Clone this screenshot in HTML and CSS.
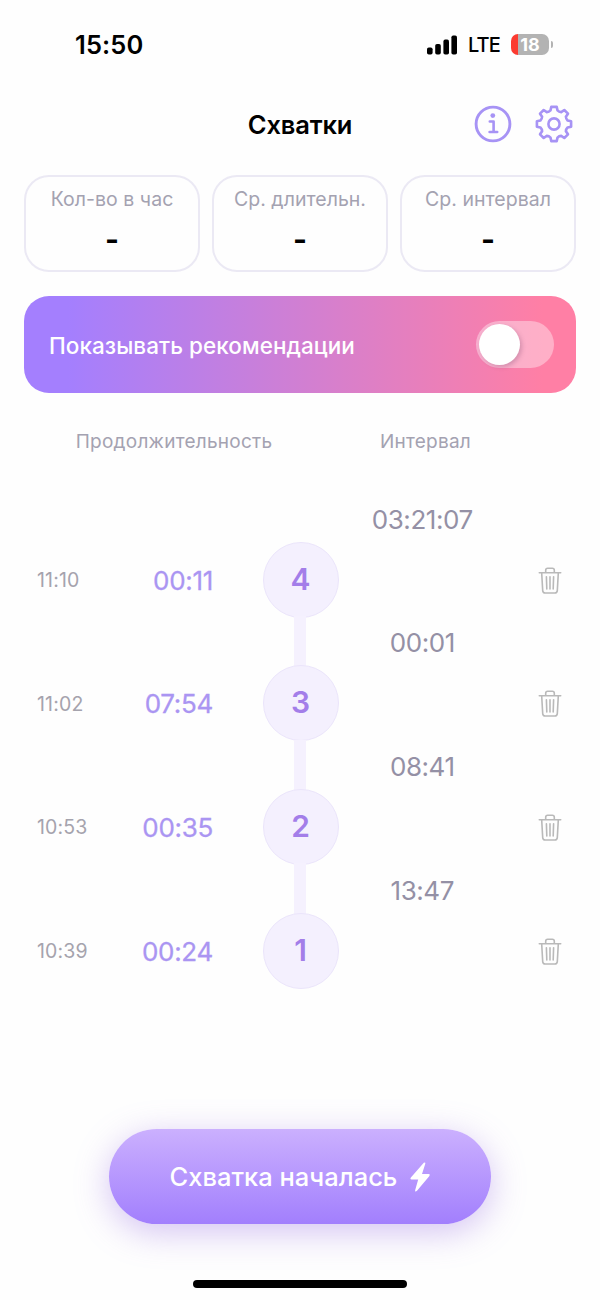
FILE: index.html
```html
<!DOCTYPE html>
<html lang="ru">
<head>
<meta charset="utf-8">
<title>Схватки</title>
<link rel="stylesheet" href="styles.css">
</head>
<body>
<svg class="defs" aria-hidden="true">
  <symbol id="trash" viewBox="0 0 24 28">
    <path d="M1.3 5.7H22.7M7.7 5.5V3.2Q7.7 1.2 9.7 1.2H14.3Q16.3 1.2 16.3 3.2V5.5M3.7 6L4.7 23.6Q4.9 26 7.2 26H16.8Q19.1 26 19.3 23.6L20.3 6M8.4 9.7L8.8 22M12 9.7V22M15.6 9.7L15.2 22" fill="none" stroke="currentColor" stroke-width="1.6" stroke-linecap="round" stroke-linejoin="round"/>
  </symbol>
</svg>
<div class="screen">
  <header class="status">
    <span class="clock">15:50</span>
    <div class="status-right">
      <svg class="signal" width="30" height="20" viewBox="0 0 30 20"><rect x="0" y="12.5" width="5.6" height="7" rx="1.8"/><rect x="8.2" y="9" width="5.6" height="10.5" rx="1.8"/><rect x="16.4" y="4.6" width="5.6" height="14.9" rx="1.8"/><rect x="24.4" y="0.5" width="5.6" height="19" rx="1.8"/></svg>
      <span class="lte">LTE</span>
      <div class="battery"><span class="level">18</span><i class="cap"></i></div>
    </div>
  </header>
  <nav class="nav">
    <h1 class="title">Схватки</h1>
    <div class="actions">
      <svg width="38" height="38" viewBox="-19 -19 38 38" fill="none" stroke="currentColor" stroke-width="2.9" stroke-linecap="round" stroke-linejoin="round"><circle r="16.9"/><circle cx="-.2" cy="-8.4" r="2.4" fill="currentColor" stroke="none"/><path d="M-3.2-2.5H.6V7.8M-3.4 8H4.2" stroke-width="2.6"/></svg>
      <svg width="38" height="38" viewBox="-19 -19 38 38" fill="none" stroke="currentColor" stroke-width="2.6" stroke-linejoin="round"><path d="M-2.7-17.1H2.7L3.5-13.6Q5-12 7.2-11.9L10.3-14L14-10.3L11.9-7.2Q12-5 13.6-3.5L17.1-2.7V2.7L13.6 3.5Q12 5 11.9 7.2L14 10.3L10.3 14L7.2 11.9Q5 12 3.5 13.6L2.7 17.1H-2.7L-3.5 13.6Q-5 12-7.2 11.9L-10.3 14L-14 10.3L-11.9 7.2Q-12 5-13.6 3.5L-17.1 2.7V-2.7L-13.6-3.5Q-12-5-11.9-7.2L-14-10.3L-10.3-14L-7.2-11.9Q-5-12-3.5-13.6Z"/><circle r="5.6"/></svg>
    </div>
  </nav>
  <main>
    <section class="stats">
      <div class="stat"><span class="stat-label">Кол-во в час</span><b class="dash">-</b></div>
      <div class="stat"><span class="stat-label">Ср. длительн.</span><b class="dash">-</b></div>
      <div class="stat"><span class="stat-label">Ср. интервал</span><b class="dash">-</b></div>
    </section>
    <section class="banner">
      <span class="banner-text">Показывать рекомендации</span>
      <span class="switch"><i class="knob"></i></span>
    </section>
    <div class="heads"><span class="head-duration">Продолжительность</span><span class="head-interval">Интервал</span></div>
    <section class="timeline">
      <div class="gap"><span class="interval">03:21:07</span></div>
      <div class="row"><span class="time">11:10</span><span class="duration">00:11</span><span class="num">4</span><svg class="trash"><use href="#trash"/></svg></div>
      <div class="gap"><i class="link"></i><span class="interval">00:01</span></div>
      <div class="row"><span class="time">11:02</span><span class="duration">07:54</span><span class="num">3</span><svg class="trash"><use href="#trash"/></svg></div>
      <div class="gap"><i class="link"></i><span class="interval">08:41</span></div>
      <div class="row"><span class="time">10:53</span><span class="duration">00:35</span><span class="num">2</span><svg class="trash"><use href="#trash"/></svg></div>
      <div class="gap"><i class="link"></i><span class="interval">13:47</span></div>
      <div class="row"><span class="time">10:39</span><span class="duration">00:24</span><span class="num">1</span><svg class="trash"><use href="#trash"/></svg></div>
    </section>
  </main>
  <footer class="footer">
    <button class="start"><span class="start-text">Схватка началась</span><svg width="20" height="30" viewBox="0 0 20 30"><path d="M13.8.8Q15.8-.4 15.2 2L12 12H18.6Q20.6 12.2 19.2 14.2L7 28.8Q4.8 30.6 5.2 28L8.2 17.6H1.6Q-.4 17.2.9 15.4Z" fill="currentColor"/></svg></button>
    <div class="home"></div>
  </footer>
</div>
</body>
</html>
```
FILE: styles.css
```css
* { box-sizing: border-box; }
body { margin: 0; background: #fefefe; font-family: Inter, "Liberation Sans", sans-serif; color: #000; }
.defs { display: none; }
.screen { width: 600px; height: 1300px; display: flex; flex-direction: column; overflow: hidden; }
.status { height: 88px; padding: 0 51px 0 75px; display: flex; align-items: center; justify-content: space-between; }
.clock { font-size: 25.5px; font-weight: 600; letter-spacing: .1px; padding-top: 1px; }
.status-right { display: flex; align-items: center; padding-top: 1px; }
.signal { margin-right: 11px; }
.lte { font-size: 20px; font-weight: 500; letter-spacing: -.9px; width: 43px; line-height: 22px; padding-top: 1px; }
.battery { position: relative; width: 38px; height: 21px; border-radius: 7px; background: linear-gradient(90deg, #fb3b30 7px, #b3b3b3 7px); color: #fff; text-align: center; }
.level { display: block; font-size: 18px; line-height: 21px; font-weight: 700; letter-spacing: -.1px; }
.cap { position: absolute; left: 39.5px; top: 7px; width: 2px; height: 7px; border-radius: 0 3px 3px 0; background: #b3b3b3; }
.nav { height: 72px; display: grid; grid-template-columns: 1fr auto 1fr; align-items: center; padding: 0 26px; }
.title { grid-column: 2; margin: 0; font-size: 25.5px; font-weight: 600; letter-spacing: -.15px; }
.actions { justify-self: end; display: flex; gap: 23px; color: #a793f5; padding-right: 1px; }
.actions svg { display: block; }
main { padding: 15px 24px 0; }
.stats { display: grid; grid-template-columns: repeat(3, 1fr); gap: 12px; }
.stat { height: 97px; border: 2px solid #ebe9f4; border-radius: 25px; display: flex; flex-direction: column; align-items: center; padding-top: 10px; }
.stat-label { font-size: 19.5px; line-height: 24px; color: #a4a2b1; white-space: nowrap; letter-spacing: .03px; }
.dash { font-size: 30px; line-height: 32px; margin-top: 12px; }
.banner { height: 97px; margin-top: 24px; border-radius: 25px; padding: 0 22px 0 25px; display: flex; align-items: center; justify-content: space-between; background: linear-gradient(90deg, #a47ffe 8%, #ff7fa5 94%); color: #fff; }
.banner-text { font-size: 22.5px; font-weight: 500; letter-spacing: .05px; padding-top: 1px; }
.switch { width: 78px; height: 47px; border-radius: 24px; padding: 3px; background: rgba(255,255,255,.38); }
.knob { display: block; width: 41px; height: 41px; border-radius: 50%; background: #fff; box-shadow: 2px 2px 4px rgba(100,50,90,.25); }
.heads { display: grid; grid-template-columns: 300px 195px; margin-top: 37px; font-size: 19px; line-height: 24px; letter-spacing: .25px; color: #a4a2b1; text-align: center; }
.head-interval { padding-left: 8px; }
.timeline { padding-top: 40px; }
.gap, .row { display: grid; grid-template-columns: 52px 137px 49.5px 77px 159.5px 77px; align-items: center; }
.gap { height: 47.65px; }
.row { height: 76px; }
.time { padding: 1px 0 0 13px; font-size: 19.5px; letter-spacing: .15px; color: #a5a3ad; white-space: nowrap; }
.duration { text-align: right; font-size: 26px; letter-spacing: -.3px; padding-top: 1px; color: #aa95f2; -webkit-text-stroke: .3px #aa95f2; }
.num { grid-column: 4; width: 76px; height: 76px; border-radius: 50%; border: 1.5px solid #ebe5fb; background: #f4f0fe; color: #a37ee9; font-size: 30px; line-height: 73px; font-weight: 600; text-align: center; }
.link { grid-column: 4; justify-self: center; width: 12px; height: 51px; background: #f5f1fe; margin: -2px 2px -2px 0; }
.interval { grid-column: 5; justify-self: center; font-size: 26px; letter-spacing: -.45px; color: #9490a5; padding: 3px 0 0 6px; }
.trash { grid-column: 6; width: 24px; height: 28px; margin: 2px 0 0 39px; color: #b9b9b9; }
.footer { margin-top: auto; display: flex; flex-direction: column; align-items: center; padding-bottom: 12px; }
.start { width: 382px; height: 95px; border: 0; border-radius: 48px; background: linear-gradient(#cbb0fe, #a27ffd); box-shadow: 0 8px 34px rgba(148,105,225,.4); color: #fff; font: 500 25.5px Inter, "Liberation Sans", sans-serif; display: flex; align-items: center; justify-content: center; gap: 13px; }
.home { width: 214px; height: 8px; border-radius: 4px; background: #000; margin-top: 56px; }
```
